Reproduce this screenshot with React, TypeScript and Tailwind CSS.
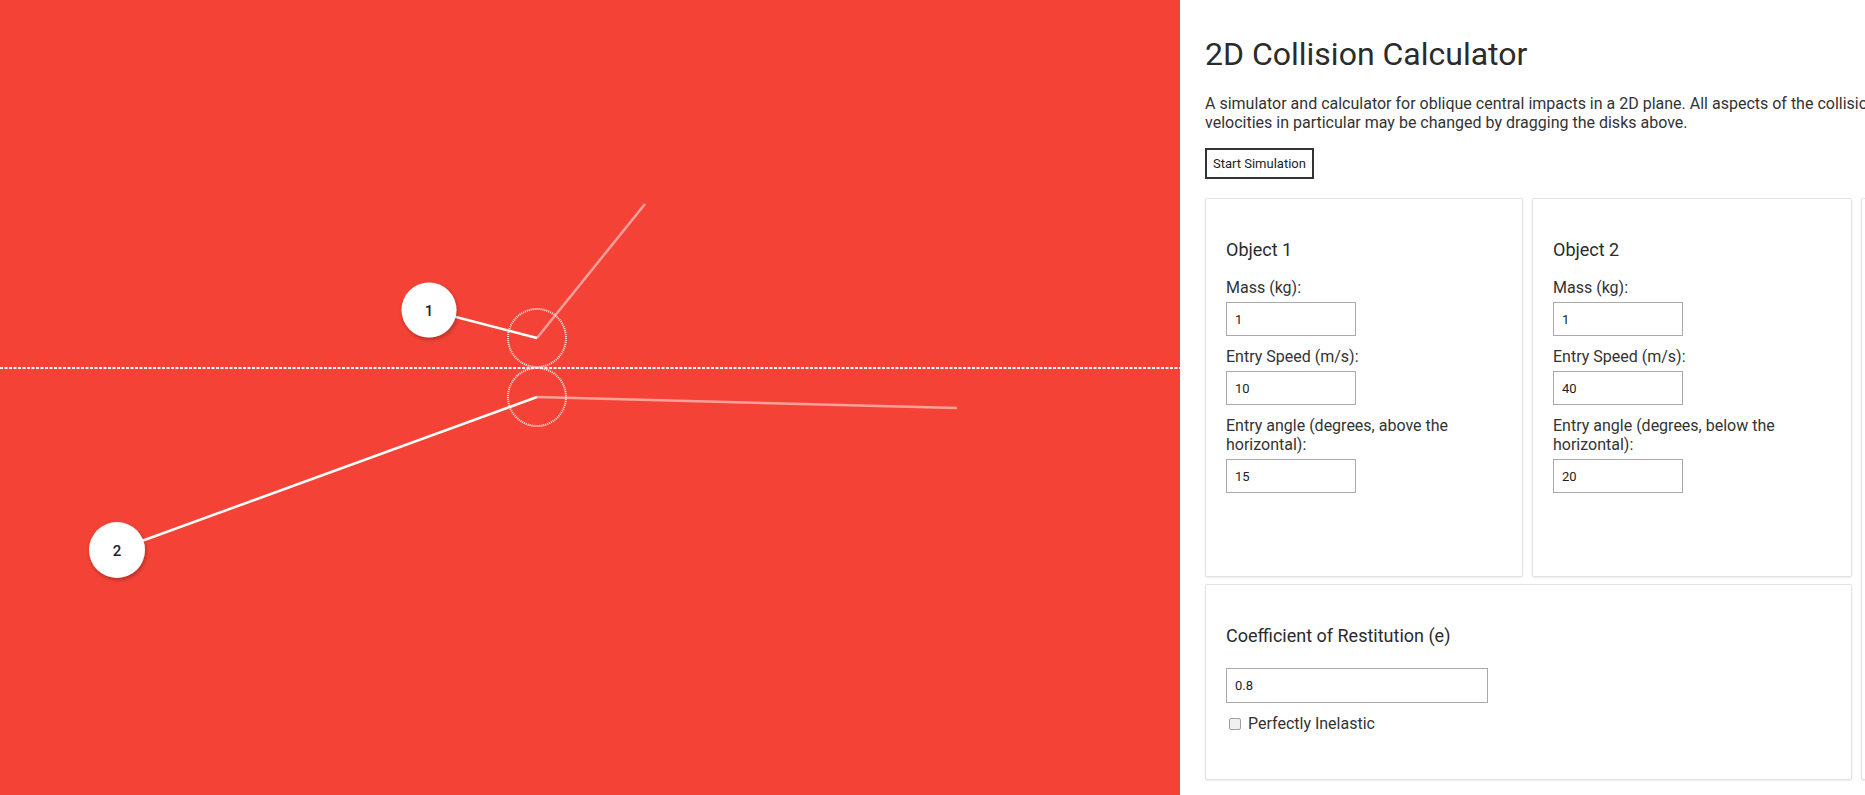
import React from 'react';

const Field: React.FC<{ label: string; value: string }> = ({ label, value }) => {
    return (
        <div>
            <label className="block text-[16px] leading-[19px] text-[#333] mb-[5px]">{label}</label>
            <input
                readOnly
                value={value}
                className="block w-[130px] h-[34px] border border-[#a9a9a9] bg-white px-[8px] text-[13px] text-[#222] outline-none mb-[11px]"
            />
        </div>
    );
};

const ObjectCard: React.FC<{ title: string; mass: string; speed: string; angleLabel: string; angle: string }> = ({ title, mass, speed, angleLabel, angle }) => {
    return (
        <div className="bg-white border border-[#e3e3e3] rounded-[2px] shadow-[0_1px_2px_rgba(0,0,0,0.08)] px-[20px] pt-[40px]">
            <h3 className="text-[18px] leading-[22px] text-[#2b2b2b] mb-[17px]">{title}</h3>
            <Field label="Mass (kg):" value={mass} />
            <Field label="Entry Speed (m/s):" value={speed} />
            <Field label={angleLabel} value={angle} />
        </div>
    );
};

const Canvas: React.FC = () => {
    return (
        <svg viewBox="0 0 1180 795" className="block w-[1180px] h-full">
            <defs>
                <filter id="disk-shadow" x="-50%" y="-50%" width="200%" height="200%">
                    <feDropShadow dx="1" dy="2" stdDeviation="2" floodColor="#000" floodOpacity="0.3" />
                </filter>
            </defs>
            <rect width="1180" height="795" fill="#f44336" />
            <line x1="0" y1="368" x2="1180" y2="368" stroke="#fff" strokeWidth="2" strokeDasharray="3 1.5" />

            {/* exit velocity lines */}
            <line x1="537" y1="338" x2="645" y2="204" stroke="#fff" strokeOpacity="0.5" strokeWidth="2.5" />
            <line x1="537" y1="397" x2="957" y2="408" stroke="#fff" strokeOpacity="0.5" strokeWidth="2.5" />

            {/* entry velocity lines */}
            <line x1="429" y1="310" x2="537" y2="338" stroke="#fff" strokeWidth="2.5" />
            <line x1="117" y1="550" x2="537" y2="397" stroke="#fff" strokeWidth="2.5" />

            {/* collision ghosts */}
            <circle cx="537" cy="338" r="29" fill="none" stroke="#fff" strokeOpacity="0.9" strokeWidth="2" strokeDasharray="1 1" />
            <circle cx="537" cy="397" r="29" fill="none" stroke="#fff" strokeOpacity="0.9" strokeWidth="2" strokeDasharray="1 1" />

            {/* disks */}
            <g filter="url(#disk-shadow)">
                <circle cx="429" cy="310" r="27.5" fill="#fff" />
                <circle cx="117" cy="550" r="28" fill="#fff" />
            </g>
            <text x="429" y="315.5" textAnchor="middle" fontFamily="Roboto, sans-serif" fontSize="15" fontWeight="500" fill="#222">1</text>
            <text x="117" y="555.5" textAnchor="middle" fontFamily="Roboto, sans-serif" fontSize="15" fontWeight="500" fill="#222">2</text>
        </svg>
    );
};

const App: React.FC = () => {
    return (
        <div className="flex h-screen w-full overflow-hidden bg-white font-['Roboto',sans-serif]">
            <div className="w-[1180px] shrink-0 h-full bg-[#f44336]">
                <Canvas />
            </div>
            <div className="flex-1 min-w-0 overflow-hidden pl-[25px] pt-[35px]">
                <h1 className="text-[32px] leading-[38px] text-[#2b2b2b] whitespace-nowrap">2D Collision Calculator</h1>
                <p className="mt-[21px] text-[16px] leading-[19px] text-[#333] whitespace-nowrap">
                    A simulator and calculator for oblique central impacts in a 2D plane. All aspects of the collision may be adjusted, and the entry
                    <br />
                    velocities in particular may be changed by dragging the disks above.
                </p>
                <button className="mt-[16px] h-[31px] px-[6px] border-2 border-[#333] bg-white text-[13px] leading-[15px] text-[#222]">
                    Start Simulation
                </button>
                <div className="mt-[19px] grid grid-cols-[318px_320px_320px] grid-rows-[379px_196px] gap-x-[9px] gap-y-[7px] w-max">
                    <ObjectCard title="Object 1" mass="1" speed="10" angleLabel="Entry angle (degrees, above the horizontal):" angle="15" />
                    <ObjectCard title="Object 2" mass="1" speed="40" angleLabel="Entry angle (degrees, below the horizontal):" angle="20" />
                    <div className="row-span-2 bg-white border border-[#e3e3e3] rounded-[2px] shadow-[0_1px_2px_rgba(0,0,0,0.08)]" />
                    <div className="col-span-2 bg-white border border-[#e3e3e3] rounded-[2px] shadow-[0_1px_2px_rgba(0,0,0,0.08)] px-[20px] pt-[40px]">
                        <h3 className="text-[18px] leading-[22px] text-[#2b2b2b] mb-[21px]">Coefficient of Restitution (e)</h3>
                        <input
                            readOnly
                            value="0.8"
                            className="block w-[262px] h-[35px] border border-[#a9a9a9] bg-white px-[8px] text-[13px] text-[#222] outline-none"
                        />
                        <div className="mt-[11px] flex items-center gap-[7px] pl-[3px]">
                            <span className="w-[12px] h-[12px] border border-[#a0a0a0] rounded-[2px] bg-[#f0f0f0]" />
                            <span className="text-[16px] leading-[19px] text-[#333]">Perfectly Inelastic</span>
                        </div>
                    </div>
                </div>
            </div>
        </div>
    );
};

export default App;
